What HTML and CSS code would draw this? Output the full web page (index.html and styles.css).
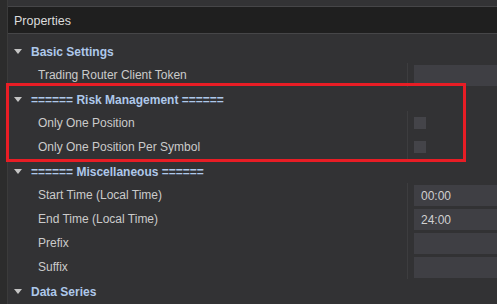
FILE: index.html
```html
<!DOCTYPE html>
<html>
<head>
<meta charset="utf-8">
<link rel="stylesheet" href="styles.css">
</head>
<body>
<div class="app">
  <div class="left"></div>
  <div class="main">
    <div class="topbar"></div>
    <div class="header">Properties</div>
    <div class="grid">
      <div class="row cat"><span class="tri"></span><span class="cat-label">Basic Settings</span></div>
      <div class="row prop"><div class="name">Trading Router Client Token</div><div class="val"><div class="box"></div></div></div>
      <div class="row cat"><span class="tri"></span><span class="cat-label">====== Risk Management ======</span></div>
      <div class="row prop"><div class="name">Only One Position</div><div class="val"><div class="check"></div></div></div>
      <div class="row prop"><div class="name">Only One Position Per Symbol</div><div class="val"><div class="check"></div></div></div>
      <div class="row cat"><span class="tri"></span><span class="cat-label">====== Miscellaneous ======</span></div>
      <div class="row prop"><div class="name">Start Time (Local Time)</div><div class="val"><div class="box">00:00</div></div></div>
      <div class="row prop"><div class="name">End Time (Local Time)</div><div class="val"><div class="box">24:00</div></div></div>
      <div class="row prop"><div class="name">Prefix</div><div class="val"><div class="box"></div></div></div>
      <div class="row prop"><div class="name">Suffix</div><div class="val"><div class="box"></div></div></div>
      <div class="row cat"><span class="tri"></span><span class="cat-label">Data Series</span></div>
    </div>
  </div>
  <div class="highlight"></div>
</div>
</body>
</html>
```
FILE: styles.css
```css
html, body {
  margin: 0;
  padding: 0;
  background: #323234;
  font-family: "Liberation Sans", Arial, sans-serif;
  font-size: 12px;
  overflow: hidden;
}
.app {
  position: relative;
  display: flex;
  width: 497px;
  height: 304px;
  overflow: hidden;
}
.left {
  width: 7px;
  flex: 0 0 7px;
  background: #2c2c2c;
  border-right: 1px solid #3b3b3b;
}
.main {
  flex: 1;
  display: flex;
  flex-direction: column;
  min-width: 0;
}
.topbar {
  height: 6px;
  background: #333335;
  border-bottom: 1px solid #464648;
}
.header {
  height: 25px;
  padding-top: 1px;
  line-height: 26px;
  background: #1f1f1f;
  border-bottom: 1px solid #464648;
  padding-left: 6px;
  color: #dcdcdc;
  font-size: 12.5px;
  overflow: hidden;
}
.grid {
  flex: 1;
  background: #323234;
  padding-top: 5px;
}
.row {
  display: flex;
  height: 24px;
  align-items: stretch;
}
.cat {
  align-items: center;
  padding-left: 6px;
}
.tri {
  width: 0;
  height: 0;
  border-left: 4.5px solid transparent;
  border-right: 4.5px solid transparent;
  border-top: 5px solid #c4c4c4;
  margin-right: 9px;
  margin-top: 1px;
}
.cat-label {
  font-weight: bold;
  color: #aec8ea;
  margin-top: 2px;
}
.name {
  flex: 0 0 369px;
  padding-left: 30px;
  line-height: 25px;
  color: #cbcbcb;
  white-space: nowrap;
}
.val {
  flex: 1;
  border-left: 1px solid #3d3d3f;
  padding-left: 6px;
  display: flex;
  align-items: flex-start;
}
.box {
  margin-top: 2px;
  height: 21px;
  line-height: 22px;
  flex: 1;
  background: #3f3f44;
  color: #d0d0d0;
  padding-left: 7px;
}
.check {
  margin-top: 6px;
  width: 12px;
  height: 12px;
  background: #444449;
}
.highlight {
  position: absolute;
  left: 6px;
  top: 83px;
  width: 454px;
  height: 73px;
  border: 3px solid #e81d25;
}
```
